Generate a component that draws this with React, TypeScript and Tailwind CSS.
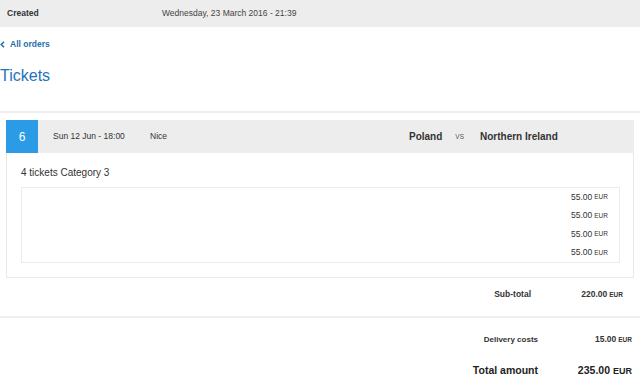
import React from "react";

const prices = ["55.00", "55.00", "55.00", "55.00"];

export default function App() {
  return (
    <div
      className="w-[642px] h-[384px] overflow-hidden bg-white text-[#333]"
      style={{ fontFamily: '"Liberation Sans", Arial, sans-serif' }}
    >
      {/* Top bar */}
      <div className="w-[640px] h-[27px] bg-[#ededed] flex items-center text-[8.5px]">
        <div className="pl-[7px] w-[162px] font-bold text-[#333]">Created</div>
        <div className="text-[#444]">Wednesday, 23 March 2016 - 21:39</div>
      </div>

      {/* Back link */}
      <div className="h-[35px] flex items-center">
        <a className="flex items-center gap-[5px] text-[8.5px] font-bold text-[#1f6fae]">
          <svg width="5" height="7" viewBox="0 0 5 7" className="ml-[0px]">
            <path d="M4 0.8 L1.2 3.5 L4 6.2" fill="none" stroke="#1f6fae" strokeWidth="1.5" />
          </svg>
          <span>All orders</span>
        </a>
      </div>

      {/* Heading */}
      <div className="h-[28px] flex items-center">
        <h1 className="text-[16px] leading-none text-[#1e73b8] font-normal">Tickets</h1>
      </div>

      <div className="h-[21px]" />
      <div className="w-[640px] h-[2px] bg-[#efefef]" />

      {/* Card */}
      <div className="mt-[7px] ml-[6px] w-[628px] flex flex-col">
        <div className="h-[33px] bg-[#ededed] flex items-center">
          <div className="w-[32px] h-full bg-[#2b9be6] text-white text-[12px] flex items-center justify-center">
            6
          </div>
          <div className="ml-[15px] w-[97px] text-[8.5px] text-[#333]">Sun 12 Jun - 18:00</div>
          <div className="text-[8.5px] text-[#333]">Nice</div>
          <div className="ml-auto mr-[74px] flex items-center">
            <div className="text-[10px] font-bold text-[#333]">Poland</div>
            <div className="ml-[13px] text-[6.5px] text-[#555]">VS</div>
            <div className="ml-[16px] w-[80px] text-[10px] font-bold text-[#333] whitespace-nowrap">
              Northern Ireland
            </div>
          </div>
        </div>
        <div className="border-x border-b border-[#e9e9e9] pl-[14px] pr-[13px] pt-[14px] pb-[14px]">
          <div className="text-[10px] leading-[12px] text-[#333]">4 tickets Category 3</div>
          <div className="mt-[8px] border border-[#ebebeb] flex flex-col">
            {prices.map((p, i) => (
              <div key={i} className="h-[18.5px] flex items-center justify-end pr-[11px] text-[8.5px] text-[#333]">
                <span>{p}</span>
                <span className="ml-[2px] text-[6.5px]">EUR</span>
              </div>
            ))}
          </div>
        </div>
      </div>

      {/* Sub-total */}
      <div className="h-[32px] flex items-center justify-end pr-[19px]">
        <div className="text-[8.5px] font-bold text-[#333]">Sub-total</div>
        <div className="w-[92px] text-right text-[8.5px] font-bold text-[#333]">
          220.00<span className="ml-[2px] text-[6.5px]">EUR</span>
        </div>
      </div>
      <div className="mt-[6px] w-[640px] h-[2px] bg-[#efefef]" />

      {/* Delivery */}
      <div className="h-[43px] flex items-center justify-end pr-[10px]">
        <div className="text-[8px] font-bold text-[#333]">Delivery costs</div>
        <div className="w-[94px] text-right text-[8.5px] font-bold text-[#333]">
          15.00<span className="ml-[2px] text-[6.5px]">EUR</span>
        </div>
      </div>
      {/* Total */}
      <div className="h-[20px] flex items-center justify-end pr-[10px]">
        <div className="text-[10.5px] font-bold text-[#222]">Total amount</div>
        <div className="w-[94px] text-right text-[10.5px] font-bold text-[#222]">
          235.00<span className="ml-[3px] text-[9px]">EUR</span>
        </div>
      </div>
    </div>
  );
}
